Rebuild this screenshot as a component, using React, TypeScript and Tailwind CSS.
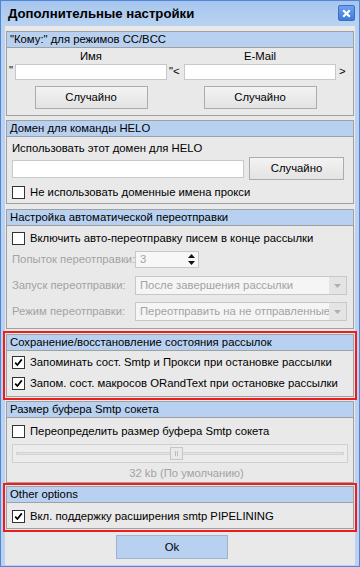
import React from "react";

const F = "font-['Liberation_Sans',Arial,sans-serif]";

const Check = ({ checked }: { checked?: boolean }) => (
  <div className="w-[13px] h-[13px] border border-[#333333] bg-white flex items-center justify-center shrink-0">
    {checked && (
      <svg width="9" height="9" viewBox="0 0 9 9">
        <path d="M1.2 4.6 L3.4 7 L7.8 1.4" stroke="#000" strokeWidth="1.7" fill="none" />
      </svg>
    )}
  </div>
);

const Group = ({
  title,
  className,
  children,
}: {
  title: string;
  className?: string;
  children?: React.ReactNode;
}) => (
  <div className={`border border-[#a0a0a0] bg-[#e9e9e9] flex flex-col shrink-0 ${className ?? ""}`}>
    <div className="h-[16px] bg-[#b8d1f0] border-b border-[#a0a0a0] pl-[3px] text-[11.3px] leading-[15px] text-black whitespace-nowrap">
      {title}
    </div>
    {children}
  </div>
);

const Btn = ({ children, className }: { children: React.ReactNode; className?: string }) => (
  <div
    className={`h-[23px] border border-[#acacac] bg-gradient-to-b from-[#f3f3f3] to-[#e3e3e3] flex items-center justify-center text-[11.3px] text-black ${className ?? ""}`}
  >
    {children}
  </div>
);

const CheckRow = ({ checked, label, className }: { checked?: boolean; label: string; className?: string }) => (
  <div className={`h-[14px] flex items-center gap-[5px] pl-[5px] text-[11.3px] text-black whitespace-nowrap ${className ?? ""}`}>
    <Check checked={checked} />
    <span>{label}</span>
  </div>
);

const ComboArrow = () => (
  <div className="w-[17px] h-full bg-[#e4e4e4] flex items-center justify-center shrink-0">
    <svg width="7" height="4" viewBox="0 0 7 4">
      <path d="M0 0 L7 0 L3.5 4 Z" fill="#b0b0b0" />
    </svg>
  </div>
);

export default function App() {
  return (
    <div className={`${F} w-[360px] h-[567px] bg-[#bad2f0] border border-[#4f86d8] flex flex-col overflow-hidden`}>
      {/* title bar */}
      <div className="h-[25px] shrink-0 bg-gradient-to-b from-[#a7c6ee] to-[#b9d2f1] flex items-center justify-between pl-[7px] pr-[4px]">
        <span className="text-[13.2px] font-bold text-black leading-none">Дополнительные настройки</span>
        <div className="w-[17px] h-[16px] mt-[-1px] rounded-[2px] border border-[#3a6fc8] bg-gradient-to-b from-[#6ea2ee] to-[#3f7ad9] flex items-center justify-center">
          <svg width="9" height="9" viewBox="0 0 9 9">
            <path d="M1.2 1.2 L7.8 7.8 M7.8 1.2 L1.2 7.8" stroke="#fff" strokeWidth="2.2" />
          </svg>
        </div>
      </div>

      {/* client */}
      <div className="mx-[4px] h-[539px] shrink-0 bg-[#e9e9e9] flex flex-col px-[1px]">
        {/* group 1 */}
        <Group title={"\"Кому:\" для режимов CC/BCC"} className="mt-[5px] h-[85px]">
          <div className="grid grid-cols-[6px_152px_17px_152px_1fr] grid-rows-[14px_17px_23px] pl-[2px] mt-[1px] text-[11.3px] text-black">
            <div />
            <div className="flex items-center justify-center leading-[14px]">Имя</div>
            <div />
            <div className="flex items-center justify-center leading-[14px]">E-Mail</div>
            <div />

            <div className="mt-[1px] leading-[12px]">"</div>
            <div className="mt-[1px] bg-white border border-[#c8c8c8]" />
            <div className="mt-[1px] flex items-center pl-[2px] leading-none">"&lt;</div>
            <div className="mt-[1px] bg-white border border-[#c8c8c8]" />
            <div className="mt-[1px] flex items-center pl-[3px] leading-none">&gt;</div>

            <div />
            <div className="mt-[6px] flex justify-center">
              <Btn className="w-[113px]">Случайно</Btn>
            </div>
            <div />
            <div className="mt-[6px] flex justify-center">
              <Btn className="w-[113px]">Случайно</Btn>
            </div>
            <div />
          </div>
        </Group>

        {/* group 2 */}
        <Group title="Домен для команды HELO" className="mt-[4px] h-[84px]">
          <div className="pl-[5px] pt-[4px] text-[11.3px] leading-[14px] text-black whitespace-nowrap">
            Использовать этот домен для HELO
          </div>
          <div className="mt-[2px] flex items-center pl-[5px]">
            <div className="w-[232px] h-[18px] bg-white border border-[#c8c8c8]" />
            <Btn className="ml-[5px] w-[95px]">Случайно</Btn>
          </div>
          <CheckRow label="Не использовать доменные имена прокси" className="mt-[5px]" />
        </Group>

        {/* group 3 */}
        <Group title="Настройка автоматической переотправки" className="mt-[5px] h-[120px]">
          <CheckRow label="Включить авто-переотправку писем в конце рассылки" className="mt-[5px]" />
          <div className="mt-[6px] flex items-center pl-[5px] text-[11.3px] text-[#a3a3a3] whitespace-nowrap">
            <div className="w-[123px]">Попыток переотправки:</div>
            <div className="w-[64px] h-[17px] bg-[#f7f7f7] border border-[#c8c8c8] flex items-center justify-between pl-[4px] pr-[3px]">
              <span className="leading-none">3</span>
              <svg width="7" height="11" viewBox="0 0 7 11">
                <path d="M0 4 L7 4 L3.5 0 Z" fill="#111" />
                <path d="M0 7 L7 7 L3.5 11 Z" fill="#111" />
              </svg>
            </div>
          </div>
          <div className="mt-[8px] flex items-center pl-[5px] text-[11.3px] text-[#a3a3a3] whitespace-nowrap">
            <div className="w-[123px]">Запуск переотправки:</div>
            <div className="w-[212px] h-[19px] bg-[#f5f5f5] border border-[#c8c8c8] flex items-center">
              <span className="flex-1 pl-[4px] overflow-hidden">После завершения рассылки</span>
              <ComboArrow />
            </div>
          </div>
          <div className="mt-[7px] flex items-center pl-[5px] text-[11.3px] text-[#a3a3a3] whitespace-nowrap">
            <div className="w-[123px]">Режим переотправки:</div>
            <div className="w-[212px] h-[19px] bg-[#f5f5f5] border border-[#c8c8c8] flex items-center">
              <span className="flex-1 pl-[4px] overflow-hidden">Переотправить на не отправленные</span>
              <ComboArrow />
            </div>
          </div>
        </Group>

        {/* red box 1 */}
        <div className="mt-[2px] -mx-[3px] border-2 border-[#ee1c1c] p-[1px] shrink-0">
          <Group title="Сохранение/восстановление состояния рассылок" className="h-[63px]">
            <CheckRow checked label="Запоминать сост. Smtp и Прокси при остановке рассылки" className="mt-[4px]" />
            <CheckRow checked label="Запом. сост. макросов ORandText при остановке рассылки" className="mt-[7px]" />
          </Group>
        </div>

        {/* group 5 */}
        <Group title="Размер буфера Smtp сокета" className="mt-[1px] h-[82px]">
          <CheckRow label="Переопределить размер буфера Smtp сокета" className="mt-[6px]" />
          <div className="mt-[6px] ml-[5px] w-[336px] h-[19px] border border-[#cfcfcf] bg-[#ececec] relative flex items-center px-[3px]">
            <div className="flex-1 h-[3px] border border-[#d2d2d2] bg-[#e4e4e4]" />
            <div className="absolute left-[157px] top-[2px] w-[13px] h-[13px] border border-[#c6c6c6] bg-[#e9e9e9] flex items-center justify-center gap-[1px]">
              <div className="w-[1px] h-[5px] bg-[#bdbdbd]" />
              <div className="w-[1px] h-[5px] bg-[#bdbdbd]" />
            </div>
          </div>
          <div className="mt-[3px] text-center text-[11.3px] leading-[14px] text-[#a3a3a3] pl-[13px]">32 kb (По умолчанию)</div>
        </Group>

        {/* red box 2 */}
        <div className="-mx-[3px] border-2 border-[#ee1c1c] p-[1px] shrink-0">
          <Group title="Other options" className="h-[43px]">
            <CheckRow checked label="Вкл. поддержку расширения smtp PIPELINING" className="mt-[6px]" />
          </Group>
        </div>

        {/* ok */}
        <div className="mt-[3px] flex">
          <div className="ml-[110px] w-[112px] h-[24px] border border-[#9fb3cc] bg-[#b8d1f0] flex items-center justify-center text-[11.3px] text-black">
            Ok
          </div>
        </div>
      </div>
    </div>
  );
}
